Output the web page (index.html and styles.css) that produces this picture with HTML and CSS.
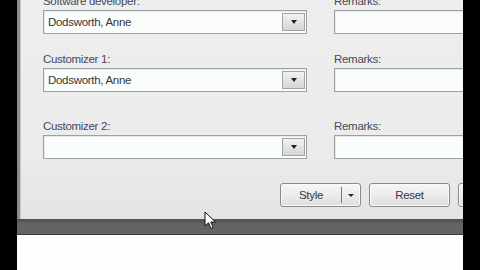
FILE: index.html
```html
<!DOCTYPE html>
<html>
<head>
<meta charset="utf-8">
<link rel="stylesheet" href="styles.css">
</head>
<body>
<div class="screen">
  <div class="edge"></div>
  <div class="main">
    <div class="dialog">
      <div class="fields">
        <div class="field f1">
          <div class="label">Software developer:</div>
          <div class="combo"><span class="value">Dodsworth, Anne</span><span class="drop"><span class="tri"></span></span></div>
        </div>
        <div class="field f1">
          <div class="label">Remarks:</div>
          <div class="textbox"></div>
        </div>
        <div class="field f2">
          <div class="label">Customizer 1:</div>
          <div class="combo"><span class="value">Dodsworth, Anne</span><span class="drop"><span class="tri"></span></span></div>
        </div>
        <div class="field f2">
          <div class="label">Remarks:</div>
          <div class="textbox"></div>
        </div>
        <div class="field f3">
          <div class="label">Customizer 2:</div>
          <div class="combo"><span class="value"></span><span class="drop"><span class="tri"></span></span></div>
        </div>
        <div class="field f3">
          <div class="label">Remarks:</div>
          <div class="textbox"></div>
        </div>
      </div>
      <div class="buttons">
        <div class="btn split"><span class="btn-text">Style</span><span class="sep"></span><span class="btn-arrow"><span class="tri small"></span></span></div>
        <div class="btn"><span class="btn-text">Reset</span></div>
        <div class="btn"><span class="btn-text">OK</span></div>
      </div>
    </div>
    <div class="bar"></div>
    <div class="blank"></div>
    <svg class="cursor" width="13" height="20" viewBox="0 0 13 20"><path d="M1 1 L1 15 L4.5 11.8 L7 17.5 L9.2 16.5 L6.8 11 L11.5 11 Z" fill="#fff" stroke="#111" stroke-width="1" stroke-linejoin="round"/></svg>
  </div>
  <div class="edge"></div>
</div>
</body>
</html>
```
FILE: styles.css
```css
html, body {
  margin: 0;
  padding: 0;
  background: #000;
  width: 480px;
  height: 270px;
  overflow: hidden;
}
.screen {
  display: flex;
  width: 480px;
  height: 270px;
}
.edge {
  width: 17px;
  flex: none;
  background: #000;
}
.main {
  position: relative;
  width: 446px;
  flex: none;
  overflow: hidden;
  display: flex;
  flex-direction: column;
  background: #fdfdfd;
}
.dialog {
  height: 219px;
  flex: none;
  background: linear-gradient(#eeeeee, #ebebeb 70%, #e4e4e4);
  border-left: 3px solid #8c8c8c;
  box-shadow: inset 1px 0 0 #c8c8c8;
  font-family: "Liberation Sans", Arial, sans-serif;
  font-size: 11.5px;
  letter-spacing: -0.3px;
  overflow: hidden;
}
.fields {
  display: grid;
  grid-template-columns: 264px 300px;
  column-gap: 27px;
  padding-left: 23px;
  margin-top: -6px;
}
.field {
  display: flex;
  flex-direction: column;
}
.f2 { margin-top: 18px; }
.f3 { margin-top: 27px; }
.label {
  height: 14px;
  line-height: 14px;
  color: #474857;
  margin-bottom: 2px;
}
.combo, .textbox {
  height: 24px;
  box-sizing: border-box;
  border: 1px solid #98a4a2;
  background: #fbfdfd;
  box-shadow: inset 1px 1px 0 #e6ebea;
}
.combo {
  display: flex;
  align-items: center;
  justify-content: space-between;
  padding: 0 1px 0 4px;
}
.value {
  color: #363636;
}
.drop {
  width: 23px;
  height: 18px;
  box-sizing: border-box;
  border: 1px solid #a3a3a3;
  background: linear-gradient(#f2f2f2, #e2e2e2 55%, #d6d6d6);
  display: flex;
  align-items: center;
  justify-content: center;
}
.tri {
  width: 0;
  height: 0;
  border-left: 3.5px solid transparent;
  border-right: 3.5px solid transparent;
  border-top: 4px solid #222;
}
.tri.small {
  border-left-width: 3px;
  border-right-width: 3px;
  border-top-width: 3px;
}
.buttons {
  display: flex;
  gap: 8px;
  margin-top: 24px;
  padding-left: 260px;
}
.btn {
  flex: none;
  width: 81px;
  height: 24px;
  box-sizing: border-box;
  border: 1px solid #8a8a8a;
  border-radius: 3px;
  background: linear-gradient(#f6f6f6, #ececec 50%, #dedede);
  box-shadow: inset 0 0 0 1px #fafafa;
  display: flex;
  align-items: center;
  justify-content: center;
  color: #363636;
}
.btn.split {
  justify-content: flex-start;
}
.split .btn-text {
  width: 60px;
  text-align: center;
}
.sep {
  width: 1px;
  height: 16px;
  background: #7a7a7a;
}
.btn-arrow {
  flex: 1;
  display: flex;
  justify-content: center;
}
.bar {
  height: 15px;
  flex: none;
  background: linear-gradient(#4e4e4e, #626262 30%, #666666);
  border-bottom: 1px solid #3a3a3a;
}
.blank {
  flex: 1;
  background: #fdfdfd;
}
.cursor {
  position: absolute;
  left: 187px;
  top: 211px;
}
```
